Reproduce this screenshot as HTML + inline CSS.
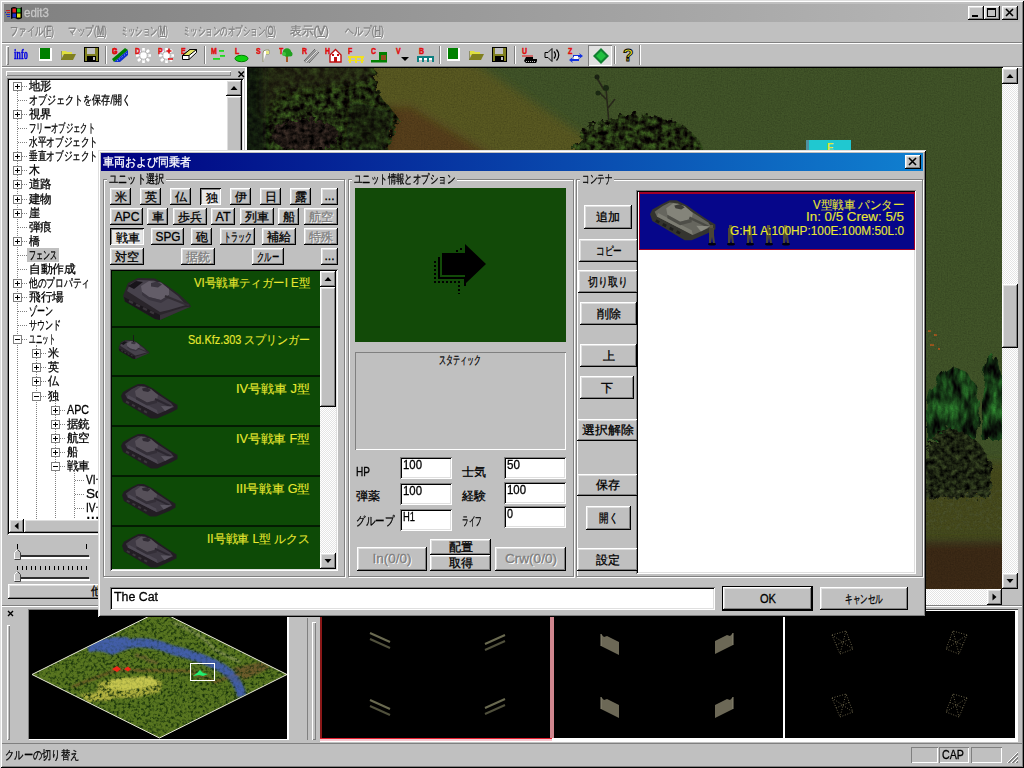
<!DOCTYPE html>
<html lang="ja"><head><meta charset="utf-8"><title>edit3</title>
<style>
html,body{margin:0;padding:0}
body{width:1024px;height:768px;overflow:hidden;background:#c0c0c0;font:12px/14px "Liberation Sans",sans-serif;color:#000;position:relative}
.a,.b,.s,.t,.s1{position:absolute;box-sizing:border-box}
.t{white-space:nowrap;display:block;-webkit-text-stroke:.3px}
.b{background:#c0c0c0;box-shadow:inset -1px -1px #000,inset 1px 1px #fff,inset -2px -2px #808080,inset 2px 2px #dfdfdf}
.b.p{background:#e8e8e8;box-shadow:inset 1px 1px #000,inset -1px -1px #fff,inset 2px 2px #808080,inset -2px -2px #dfdfdf}
.s{background:#fff;box-shadow:inset 1px 1px #808080,inset -1px -1px #fff,inset 2px 2px #000,inset -2px -2px #dfdfdf}
.s1{box-shadow:inset 1px 1px #808080,inset -1px -1px #fff}
.g{position:absolute;box-sizing:border-box;border:1px solid #808080;box-shadow:1px 1px #fff,inset 1px 1px #fff}
.dis{color:#808080;text-shadow:1px 1px #fff}
.sb{background-color:#e4e4e4;background-image:linear-gradient(45deg,#fff 25%,transparent 25%,transparent 75%,#fff 75%),linear-gradient(45deg,#fff 25%,transparent 25%,transparent 75%,#fff 75%);background-size:2px 2px;background-position:0 0,1px 1px}
.pm{position:absolute;width:9px;height:9px;box-sizing:border-box;border:1px solid #808080;background:#fff}
.pm:before{content:"";position:absolute;left:1px;top:3px;width:5px;height:1px;background:#000}
.pm.pl:after{content:"";position:absolute;left:3px;top:1px;width:1px;height:5px;background:#000}
.dv{position:absolute;width:0;border-left:1px dotted #808080}
.dh{position:absolute;height:0;border-top:1px dotted #808080}
.y{color:#e8e830;-webkit-text-stroke:.12px}
</style></head><body>
<div class="a" style="left:0;top:0;width:1024px;height:768px;box-shadow:inset 1px 1px #dfdfdf,inset -1px -1px #000,inset 2px 2px #fff,inset -2px -2px #808080"></div>
<div class="a" style="left:4px;top:4px;width:1016px;height:18px;background:linear-gradient(90deg,#808080,#b9b9b9)"></div>
<svg class="a" style="left:5px;top:5px;" width="18" height="16" viewBox="0 0 18 16"><path d="M6,3 q3,-2 6,0 q2,1 5,-1 v11 q-3,2 -5,1 q-3,-2 -6,0z" fill="#000"/>
<rect x="7.5" y="3.5" width="3.5" height="4" fill="#e02020"/><rect x="12" y="3.5" width="3.5" height="4" fill="#20c020"/>
<rect x="7.5" y="8.5" width="3.5" height="4" fill="#2030d0"/><rect x="12" y="8.5" width="3.5" height="4" fill="#e0e020"/>
<g fill="#c02020"><rect x="1" y="5" width="4" height="1"/><rect x="2" y="7" width="3" height="1"/></g>
<g fill="#2030c0"><rect x="1" y="9" width="4" height="1"/><rect x="2" y="11" width="3" height="1"/><rect x="0" y="7" width="1" height="1"/></g></svg>
<span class="t" style="left:24px;top:5px;font-size:13px;line-height:16px;color:#c6c6c6;transform:scaleX(0.886);transform-origin:0 0;">edit3</span>
<div class="b" style="left:968px;top:6px;width:16px;height:14px;"></div>
<svg class="a" style="left:968px;top:6px;" width="16" height="14" viewBox="0 0 16 14"><rect x="4" y="9" width="6" height="2" fill="#000"/></svg>
<div class="b" style="left:984px;top:6px;width:16px;height:14px;"></div>
<svg class="a" style="left:984px;top:6px;" width="16" height="14" viewBox="0 0 16 14"><rect x="3.5" y="2.5" width="8" height="8" fill="none" stroke="#000"/><rect x="3" y="2" width="9" height="2" fill="#000"/></svg>
<div class="b" style="left:1002px;top:6px;width:16px;height:14px;"></div>
<svg class="a" style="left:1002px;top:6px;" width="16" height="14" viewBox="0 0 16 14"><path d="M4,3 L11,10 M11,3 L4,10" stroke="#000" stroke-width="1.6"/></svg>
<span class="t dis" style="left:10px;top:24px;transform:scaleX(0.695);transform-origin:0 0;">ファイル(<u>F</u>)</span>
<span class="t dis" style="left:68px;top:24px;transform:scaleX(0.722);transform-origin:0 0;">マップ(<u>M</u>)</span>
<span class="t dis" style="left:121px;top:24px;transform:scaleX(0.603);transform-origin:0 0;">ミッション(<u>M</u>)</span>
<span class="t dis" style="left:183px;top:24px;transform:scaleX(0.623);transform-origin:0 0;">ミッションのオプション(<u>O</u>)</span>
<span class="t dis" style="left:290px;top:24px;transform:scaleX(0.975);transform-origin:0 0;">表示(<u>V</u>)</span>
<span class="t dis" style="left:345px;top:24px;transform:scaleX(0.740);transform-origin:0 0;">ヘルプ(<u>H</u>)</span>
<div class="a" style="left:2px;top:42px;width:1020px;height:1px;background:#808080"></div>
<div class="a" style="left:2px;top:43px;width:1020px;height:1px;background:#fff"></div>
<div class="a" style="left:2px;top:66px;width:1020px;height:1px;background:#808080"></div>
<div class="a" style="left:2px;top:67px;width:1020px;height:1px;background:#fff"></div>
<div class="a" style="left:6px;top:46px;width:3px;height:19px;box-shadow:inset 1px 1px #fff,inset -1px -1px #808080"></div>
<div class="a" style="left:639px;top:45px;width:2px;height:20px;border-left:1px solid #808080;border-right:1px solid #fff"></div>
<div class="a" style="left:105px;top:46px;width:2px;height:18px;border-left:1px solid #808080;border-right:1px solid #fff"></div>
<div class="a" style="left:204px;top:46px;width:2px;height:18px;border-left:1px solid #808080;border-right:1px solid #fff"></div>
<div class="a" style="left:439px;top:46px;width:2px;height:18px;border-left:1px solid #808080;border-right:1px solid #fff"></div>
<div class="a" style="left:514px;top:46px;width:2px;height:18px;border-left:1px solid #808080;border-right:1px solid #fff"></div>
<div class="a" style="left:614px;top:46px;width:2px;height:18px;border-left:1px solid #808080;border-right:1px solid #fff"></div>
<span class="t" style="left:14px;top:45.5px;font-size:15px;line-height:17px;font-weight:bold;font-family:'Liberation Serif',serif;color:#0000e0;transform:scaleX(0.560);transform-origin:0 0;">info</span>
<svg class="a" style="left:39px;top:47px;" width="14" height="15" viewBox="0 0 14 15"><rect x="0" y="1" width="13" height="13" fill="#fff"/><rect x="1" y="1" width="10" height="11" fill="#008000"/></svg>
<svg class="a" style="left:61px;top:48px;" width="15" height="14" viewBox="0 0 15 14"><path d="M1,3 h4 l1,1 h5 v3 h-10z" fill="#e0e040"/><path d="M0,12 l3,-6 h12 l-3,6z" fill="#808020"/><path d="M0,12 V3" stroke="#606010"/></svg>
<svg class="a" style="left:84px;top:47px;" width="15" height="15" viewBox="0 0 15 15"><rect x="0.5" y="0.5" width="14" height="14" fill="#808020" stroke="#000"/><rect x="3" y="1" width="8" height="6" fill="#c0c0c0"/><rect x="3" y="9" width="9" height="5" fill="#000"/><rect x="9" y="10" width="2" height="3" fill="#c0c0c0"/></svg>
<svg class="a" style="left:447px;top:47px;" width="14" height="15" viewBox="0 0 14 15"><rect x="0" y="1" width="13" height="13" fill="#fff"/><rect x="1" y="1" width="10" height="11" fill="#008000"/></svg>
<svg class="a" style="left:469px;top:48px;" width="15" height="14" viewBox="0 0 15 14"><path d="M1,3 h4 l1,1 h5 v3 h-10z" fill="#e0e040"/><path d="M0,12 l3,-6 h12 l-3,6z" fill="#808020"/><path d="M0,12 V3" stroke="#606010"/></svg>
<svg class="a" style="left:492px;top:47px;" width="15" height="15" viewBox="0 0 15 15"><rect x="0.5" y="0.5" width="14" height="14" fill="#808020" stroke="#000"/><rect x="3" y="1" width="8" height="6" fill="#c0c0c0"/><rect x="3" y="9" width="9" height="5" fill="#000"/><rect x="9" y="10" width="2" height="3" fill="#c0c0c0"/></svg>
<svg class="a" style="left:112px;top:47px;" width="17" height="16" viewBox="0 0 17 16"><text x="0" y="7" font-family="Liberation Sans" font-weight="bold" font-size="8.500" fill="#e01010" stroke="#e01010" stroke-width=".5" transform="translate(0,0) scale(.82,1) translate(0,0)">G</text><path d="M0,12 L13,1 l3,2 L2,15z" fill="#008000"/><path d="M2,15 L16,3 l0,5 L8,15z" fill="#1030d0"/><path d="M5,14 L15,6" stroke="#a0c0ff" stroke-dasharray="1 2"/><text x="0" y="7" font-family="Liberation Sans" font-weight="bold" font-size="8.500" fill="#e01010" stroke="#e01010" stroke-width=".5" transform="translate(0,0) scale(.82,1) translate(0,0)">G</text></svg>
<svg class="a" style="left:135px;top:47px;" width="17" height="16" viewBox="0 0 17 16"><g stroke="#fff" stroke-width="2.6"><path d="M8.500,1v3.500M8.500,12.500v3.500M1,8.500h3.500M12.500,8.500h3.500M3,3l2.500,2.500M11.500,11.500l2.500,2.500M14,3l-2.500,2.500M5.500,11.500l-2.500,2.500"/></g><circle cx="8.500" cy="8.500" r="3.200" fill="#fff"/><g stroke="#909090" stroke-width=".8" stroke-dasharray="1 1" fill="none"><circle cx="8.500" cy="8.500" r="4.400"/></g><text x="0" y="7" font-family="Liberation Sans" font-weight="bold" font-size="8.500" fill="#e01010" stroke="#e01010" stroke-width=".5" transform="translate(0,0) scale(.82,1) translate(0,0)">D</text></svg>
<svg class="a" style="left:158px;top:47px;" width="17" height="16" viewBox="0 0 17 16"><g stroke="#fff" stroke-width="2.6"><path d="M8.500,1v3.500M8.500,12.500v3.500M1,8.500h3.500M12.500,8.500h3.500M3,3l2.500,2.500M11.500,11.500l2.500,2.500M14,3l-2.500,2.500M5.500,11.500l-2.500,2.500"/></g><circle cx="8.500" cy="8.500" r="3.200" fill="#fff"/><g stroke="#909090" stroke-width=".8" stroke-dasharray="1 1" fill="none"><circle cx="8.500" cy="8.500" r="4.400"/></g><text x="0" y="7" font-family="Liberation Sans" font-weight="bold" font-size="8.500" fill="#e01010" stroke="#e01010" stroke-width=".5" transform="translate(0,0) scale(.82,1) translate(0,0)">P</text><path d="M11,1.5v5M8.5,4h5" stroke="#e01010" stroke-width="1.6"/><path d="M10,12h5" stroke="#e01010" stroke-width="1.6"/></svg>
<svg class="a" style="left:181px;top:47px;" width="17" height="16" viewBox="0 0 17 16"><text x="0" y="7" font-family="Liberation Sans" font-weight="bold" font-size="8.500" fill="#e01010" stroke="#e01010" stroke-width=".5" transform="translate(0,0) scale(.82,1) translate(0,0)">E</text><path d="M1.500,8.500 L9,2.500 h6.500 v3 L8,12.500 H1.500z" fill="#fff" stroke="#000"/><path d="M1.500,8.500 L9,2.500 h6.500 L8,8.500z" fill="#e4e460" stroke="#000"/><path d="M8,8.500 v4" stroke="#000"/></svg>
<svg class="a" style="left:211px;top:47px;" width="16" height="16" viewBox="0 0 16 16"><text x="0" y="7" font-family="Liberation Sans" font-weight="bold" font-size="8.500" fill="#e01010" stroke="#e01010" stroke-width=".5" transform="translate(0,0) scale(.82,1) translate(0,0)">M</text><g fill="#20d820"><rect x="8" y="3" width="5" height="1.800"/><rect x="9" y="8" width="5" height="1.800"/><rect x="2" y="11" width="7" height="1.800"/></g></svg>
<svg class="a" style="left:233px;top:47px;" width="17" height="16" viewBox="0 0 17 16"><text x="2" y="7" font-family="Liberation Sans" font-weight="bold" font-size="8.500" fill="#e01010" stroke="#e01010" stroke-width=".5" transform="translate(2,0) scale(.82,1) translate(-2,0)">L</text><ellipse cx="8.500" cy="11.500" rx="6.500" ry="3.200" fill="#10d010" stroke="#008000"/></svg>
<svg class="a" style="left:256px;top:47px;" width="16" height="16" viewBox="0 0 16 16"><text x="0" y="7" font-family="Liberation Sans" font-weight="bold" font-size="8.500" fill="#e01010" stroke="#e01010" stroke-width=".5" transform="translate(0,0) scale(.82,1) translate(0,0)">S</text><path d="M7,15 V6 q0,-3 3,-3 h3 v4 h-3" fill="#fff" stroke="#909070"/><rect x="10" y="4" width="3" height="3" fill="#e8e880"/></svg>
<svg class="a" style="left:279px;top:47px;" width="16" height="16" viewBox="0 0 16 16"><text x="0" y="7" font-family="Liberation Sans" font-weight="bold" font-size="8.500" fill="#e01010" stroke="#e01010" stroke-width=".5" transform="translate(0,0) scale(.82,1) translate(0,0)">T</text><path d="M8,15 V8" stroke="#a04000" stroke-width="1.6"/><circle cx="8" cy="5.5" r="4.2" fill="#20a020"/><circle cx="11" cy="7" r="2.5" fill="#20a020"/><circle cx="5" cy="7" r="2" fill="#40c040"/></svg>
<svg class="a" style="left:302px;top:47px;" width="17" height="16" viewBox="0 0 17 16"><text x="0" y="7" font-family="Liberation Sans" font-weight="bold" font-size="8.500" fill="#e01010" stroke="#e01010" stroke-width=".5" transform="translate(0,0) scale(.82,1) translate(0,0)">R</text><path d="M2,15 L13,3 l3,1 L6,16z" fill="#909090"/><path d="M4,15 L15,4" stroke="#e0e0e0"/><path d="M2,14 L13,2 M7,16 L17,5" stroke="#606060"/></svg>
<svg class="a" style="left:325px;top:47px;" width="17" height="16" viewBox="0 0 17 16"><text x="0" y="7" font-family="Liberation Sans" font-weight="bold" font-size="8.500" fill="#e01010" stroke="#e01010" stroke-width=".5" transform="translate(0,0) scale(.82,1) translate(0,0)">H</text><path d="M5,8 L10.5,2.5 L16,8 V15 H5z" fill="#fff" stroke="#c01010" stroke-width="1.4"/><rect x="9" y="10" width="3" height="5" fill="#c01010"/><rect x="7" y="7" width="2" height="2" fill="#c01010"/><rect x="12" y="7" width="2" height="2" fill="#c01010"/></svg>
<svg class="a" style="left:348px;top:47px;" width="17" height="16" viewBox="0 0 17 16"><text x="0" y="7" font-family="Liberation Sans" font-weight="bold" font-size="8.500" fill="#e01010" stroke="#e01010" stroke-width=".5" transform="translate(0,0) scale(.82,1) translate(0,0)">F</text><g fill="#f0e020"><rect x="0" y="9" width="16" height="2"/><rect x="1" y="9" width="2" height="7"/><rect x="7" y="9" width="2" height="7"/><rect x="13" y="9" width="2" height="7"/><rect x="0" y="13" width="16" height="1"/></g></svg>
<svg class="a" style="left:371px;top:47px;" width="17" height="16" viewBox="0 0 17 16"><text x="0" y="7" font-family="Liberation Sans" font-weight="bold" font-size="8.500" fill="#e01010" stroke="#e01010" stroke-width=".5" transform="translate(0,0) scale(.82,1) translate(0,0)">C</text><rect x="8" y="5" width="8" height="10" fill="#008000"/><rect x="10" y="8" width="5" height="7" fill="#905020"/><rect x="0" y="13" width="16" height="2.5" fill="#008000"/></svg>
<svg class="a" style="left:395px;top:47px;" width="15" height="16" viewBox="0 0 15 16"><text x="1" y="7" font-family="Liberation Sans" font-weight="bold" font-size="8.500" fill="#e01010" stroke="#e01010" stroke-width=".5" transform="translate(1,0) scale(.82,1) translate(-1,0)">V</text><polygon points="6,10 14,10 10,14" fill="#000"/></svg>
<svg class="a" style="left:417px;top:47px;" width="17" height="16" viewBox="0 0 17 16"><text x="2" y="7" font-family="Liberation Sans" font-weight="bold" font-size="8.500" fill="#e01010" stroke="#e01010" stroke-width=".5" transform="translate(2,0) scale(.82,1) translate(-2,0)">B</text><g fill="#108080"><rect x="0" y="9" width="17" height="2"/><rect x="0" y="11" width="2" height="4"/><rect x="5" y="11" width="2" height="4"/><rect x="10" y="11" width="2" height="4"/><rect x="15" y="11" width="2" height="4"/></g><rect x="2" y="11" width="3" height="2" fill="#fff"/><rect x="7" y="11" width="3" height="2" fill="#fff"/><rect x="12" y="11" width="3" height="2" fill="#fff"/></svg>
<svg class="a" style="left:521px;top:47px;" width="17" height="16" viewBox="0 0 17 16"><text x="1" y="7" font-family="Liberation Sans" font-weight="bold" font-size="8.500" fill="#e01010" stroke="#e01010" stroke-width=".5" transform="translate(1,0) scale(.82,1) translate(-1,0)">U</text><path d="M1,9 h11" stroke="#e01010" stroke-width="1"/><path d="M5,10 h7 v2 h4 v2 l-1,2 H5 l-2,-2z" fill="#000"/><path d="M5,14.5h9" stroke="#c0c0c0" stroke-dasharray="1 1"/></svg>
<svg class="a" style="left:544px;top:47px;" width="17" height="16" viewBox="0 0 17 16"><path d="M1,5.5 h3 l4,-4 v13 l-4,-4 h-3z" fill="#c0c0c0" stroke="#000"/><path d="M10,4.5 q3,3.5 0,7 M12.5,2.5 q4.5,5.5 0,11" fill="none" stroke="#000" stroke-width="1.2"/></svg>
<svg class="a" style="left:567px;top:47px;" width="17" height="16" viewBox="0 0 17 16"><text x="1" y="7" font-family="Liberation Sans" font-weight="bold" font-size="8.500" fill="#e01010" stroke="#e01010" stroke-width=".5" transform="translate(1,0) scale(.82,1) translate(-1,0)">Z</text><path d="M6,8 h7 l-1,-2 4,3 -4,3 1,-2 H6z" fill="#1030e0"/><path d="M12,14 H5 l1,2 -4,-3 4,-3 -1,2 h7z" fill="#1030e0"/><rect x="7" y="9" width="4" height="3" fill="#fff"/></svg>
<div class="a" style="left:588px;top:45px;width:24px;height:21px;background:#e0e0e0;box-shadow:inset 1px 1px #808080,inset -1px -1px #fff"></div>
<svg class="a" style="left:593px;top:48px;" width="16" height="16" viewBox="0 0 16 16"><polygon points="8,0 16,8 8,16 0,8" fill="#108030"/><polygon points="8,3 13,8 8,13 3,8" fill="#20c040"/></svg>
<svg class="a" style="left:621px;top:47px;" width="14" height="16" viewBox="0 0 14 16"><text x="2" y="14" font-family="Liberation Sans" font-weight="bold" font-size="17" fill="#e8e020" stroke="#000" stroke-width=".9">?</text></svg>
<div class="a" style="left:6px;top:71px;width:225px;height:5px;box-shadow:inset 1px 1px #fff,inset -1px -1px #808080"></div>
<svg class="a" style="left:237px;top:70px;" width="9" height="9" viewBox="0 0 9 9"><path d="M1.5,1.5 L7,7 M7,1.5 L1.5,7" stroke="#000" stroke-width="1.5"/></svg>
<div class="s" style="left:7px;top:78px;width:237px;height:457px;"></div>
<div class="a" style="left:9px;top:80px;width:217px;height:439px;overflow:hidden;background:#fff">
<div class="dv" style="left:8px;top:6px;width:0px;height:440px;"></div>
<div class="dv" style="left:27px;top:265px;width:0px;height:180px;"></div>
<div class="dv" style="left:46px;top:321px;width:0px;height:125px;"></div>
<div class="dv" style="left:65px;top:391px;width:0px;height:55px;"></div>
<div class="dh" style="left:9px;top:6px;width:9px;height:0px;"></div>
<i class="pm pl" style="left:4px;top:2px"></i>
<span class="t" style="left:20px;top:-1px;transform:scaleX(0.958);transform-origin:0 0;">地形</span>
<div class="dh" style="left:9px;top:20px;width:9px;height:0px;"></div>
<span class="t" style="left:20px;top:13.07px;transform:scaleX(0.754);transform-origin:0 0;">オブジェクトを保存/開く</span>
<div class="dh" style="left:9px;top:34px;width:9px;height:0px;"></div>
<i class="pm pl" style="left:4px;top:30px"></i>
<span class="t" style="left:20px;top:27.14px;transform:scaleX(0.958);transform-origin:0 0;">視界</span>
<div class="dh" style="left:9px;top:48px;width:9px;height:0px;"></div>
<span class="t" style="left:20px;top:41.21px;transform:scaleX(0.611);transform-origin:0 0;">フリーオブジェクト</span>
<div class="dh" style="left:9px;top:62px;width:9px;height:0px;"></div>
<span class="t" style="left:20px;top:55.28px;transform:scaleX(0.719);transform-origin:0 0;">水平オブジェクト</span>
<div class="dh" style="left:9px;top:76px;width:9px;height:0px;"></div>
<i class="pm pl" style="left:4px;top:72px"></i>
<span class="t" style="left:20px;top:69.35px;transform:scaleX(0.719);transform-origin:0 0;">垂直オブジェクト</span>
<div class="dh" style="left:9px;top:90px;width:9px;height:0px;"></div>
<i class="pm pl" style="left:4px;top:86px"></i>
<span class="t" style="left:20px;top:83.42px;transform:scaleX(0.917);transform-origin:0 0;">木</span>
<div class="dh" style="left:9px;top:104px;width:9px;height:0px;"></div>
<i class="pm pl" style="left:4px;top:100px"></i>
<span class="t" style="left:20px;top:97.49px;transform:scaleX(0.958);transform-origin:0 0;">道路</span>
<div class="dh" style="left:9px;top:119px;width:9px;height:0px;"></div>
<i class="pm pl" style="left:4px;top:115px"></i>
<span class="t" style="left:20px;top:111.56px;transform:scaleX(0.958);transform-origin:0 0;">建物</span>
<div class="dh" style="left:9px;top:133px;width:9px;height:0px;"></div>
<i class="pm pl" style="left:4px;top:129px"></i>
<span class="t" style="left:20px;top:125.63px;transform:scaleX(0.917);transform-origin:0 0;">崖</span>
<div class="dh" style="left:9px;top:147px;width:9px;height:0px;"></div>
<span class="t" style="left:20px;top:139.7px;transform:scaleX(0.958);transform-origin:0 0;">弾痕</span>
<div class="dh" style="left:9px;top:161px;width:9px;height:0px;"></div>
<i class="pm pl" style="left:4px;top:157px"></i>
<span class="t" style="left:20px;top:153.77px;transform:scaleX(0.917);transform-origin:0 0;">橋</span>
<div class="dh" style="left:9px;top:175px;width:9px;height:0px;"></div>
<div class="a" style="left:18px;top:168px;width:32px;height:14px;background:#c0c0c0"></div>
<span class="t" style="left:20px;top:167.84px;transform:scaleX(0.583);transform-origin:0 0;">フェンス</span>
<div class="dh" style="left:9px;top:189px;width:9px;height:0px;"></div>
<span class="t" style="left:20px;top:181.91px;transform:scaleX(0.979);transform-origin:0 0;">自動作成</span>
<div class="dh" style="left:9px;top:203px;width:9px;height:0px;"></div>
<i class="pm pl" style="left:4px;top:199px"></i>
<span class="t" style="left:20px;top:195.98px;transform:scaleX(0.726);transform-origin:0 0;">他のプロパティ</span>
<div class="dh" style="left:9px;top:217px;width:9px;height:0px;"></div>
<i class="pm pl" style="left:4px;top:213px"></i>
<span class="t" style="left:20px;top:210.05px;transform:scaleX(0.972);transform-origin:0 0;">飛行場</span>
<div class="dh" style="left:9px;top:231px;width:9px;height:0px;"></div>
<span class="t" style="left:20px;top:224.12px;transform:scaleX(0.667);transform-origin:0 0;">ゾーン</span>
<div class="dh" style="left:9px;top:245px;width:9px;height:0px;"></div>
<span class="t" style="left:20px;top:238.19px;transform:scaleX(0.667);transform-origin:0 0;">サウンド</span>
<div class="dh" style="left:9px;top:259px;width:9px;height:0px;"></div>
<i class="pm" style="left:4px;top:255px"></i>
<span class="t" style="left:20px;top:252.26px;transform:scaleX(0.542);transform-origin:0 0;">ユニット</span>
<div class="dh" style="left:28px;top:273px;width:9px;height:0px;"></div>
<i class="pm pl" style="left:23px;top:269px"></i>
<span class="t" style="left:39px;top:266.33px;transform:scaleX(0.917);transform-origin:0 0;">米</span>
<div class="dh" style="left:28px;top:287px;width:9px;height:0px;"></div>
<i class="pm pl" style="left:23px;top:283px"></i>
<span class="t" style="left:39px;top:280.4px;transform:scaleX(0.917);transform-origin:0 0;">英</span>
<div class="dh" style="left:28px;top:301px;width:9px;height:0px;"></div>
<i class="pm pl" style="left:23px;top:297px"></i>
<span class="t" style="left:39px;top:294.47px;transform:scaleX(0.917);transform-origin:0 0;">仏</span>
<div class="dh" style="left:28px;top:316px;width:9px;height:0px;"></div>
<i class="pm" style="left:23px;top:312px"></i>
<span class="t" style="left:39px;top:308.54px;transform:scaleX(0.917);transform-origin:0 0;">独</span>
<div class="dh" style="left:47px;top:330px;width:9px;height:0px;"></div>
<i class="pm pl" style="left:42px;top:326px"></i>
<span class="t" style="left:58px;top:322.61px;transform:scaleX(0.891);transform-origin:0 0;">APC</span>
<div class="dh" style="left:47px;top:344px;width:9px;height:0px;"></div>
<i class="pm pl" style="left:42px;top:340px"></i>
<span class="t" style="left:58px;top:336.68px;transform:scaleX(0.958);transform-origin:0 0;">据銃</span>
<div class="dh" style="left:47px;top:358px;width:9px;height:0px;"></div>
<i class="pm pl" style="left:42px;top:354px"></i>
<span class="t" style="left:58px;top:350.75px;transform:scaleX(0.958);transform-origin:0 0;">航空</span>
<div class="dh" style="left:47px;top:372px;width:9px;height:0px;"></div>
<i class="pm pl" style="left:42px;top:368px"></i>
<span class="t" style="left:58px;top:364.82px;transform:scaleX(0.917);transform-origin:0 0;">船</span>
<div class="dh" style="left:47px;top:386px;width:9px;height:0px;"></div>
<i class="pm" style="left:42px;top:382px"></i>
<span class="t" style="left:58px;top:378.89px;transform:scaleX(0.958);transform-origin:0 0;">戦車</span>
<div class="dh" style="left:66px;top:400px;width:9px;height:0px;"></div>
<span class="t" style="left:77px;top:392.96px;transform:scaleX(0.845);transform-origin:0 0;">VI号戦車</span>
<div class="dh" style="left:66px;top:414px;width:9px;height:0px;"></div>
<span class="t" style="left:77px;top:407.03px;transform:scaleX(1.131);transform-origin:0 0;">Sd.Kfz</span>
<div class="dh" style="left:66px;top:428px;width:9px;height:0px;"></div>
<span class="t" style="left:77px;top:421.1px;transform:scaleX(0.845);transform-origin:0 0;">IV号戦車</span>
<div class="dh" style="left:66px;top:442px;width:9px;height:0px;"></div>
<span class="t" style="left:77px;top:435.17px;transform:scaleX(1.363);transform-origin:0 0;">III号</span>
</div>
<div class="a sb" style="left:226px;top:80px;width:16px;height:439px;"></div>
<div class="b" style="left:226px;top:80px;width:16px;height:16px;"></div>
<svg class="a" style="left:226px;top:80px;" width="16" height="16" viewBox="0 0 16 16"><polygon points="4.5,10.0 11.5,10.0 8.0,6.0" fill="#000"/></svg>
<div class="b" style="left:226px;top:96px;width:16px;height:300px;"></div>
<div class="a sb" style="left:9px;top:519px;width:233px;height:14px;"></div>
<div class="b" style="left:9px;top:519px;width:15px;height:14px;"></div>
<svg class="a" style="left:9px;top:519px;" width="15" height="14" viewBox="0 0 15 14"><polygon points="9.5,3.5 9.5,10.5 5.5,7.0" fill="#000"/></svg>
<div class="b" style="left:24px;top:519px;width:170px;height:14px;"></div>
<div class="a" style="left:226px;top:519px;width:16px;height:14px;background:#c0c0c0"></div>
<div class="a" style="left:17px;top:544px;width:1px;height:5px;background:#000"></div>
<div class="a" style="left:86px;top:544px;width:1px;height:5px;background:#000"></div>
<div class="a" style="left:20px;top:555px;width:69px;height:2px;background:#303030"></div>
<div class="a" style="left:20px;top:557px;width:70px;height:2px;background:#fff"></div>
<svg class="a" style="left:14px;top:549px;" width="8" height="11" viewBox="0 0 8 11"><path d="M0.5,3.5 L3.5,0.5 L6.5,3.5 V10 H0.5z" fill="#c0c0c0" stroke="#fff"/><path d="M3.5,0.5 L6.5,3.5 V10.5 H0.5" fill="none" stroke="#404040"/></svg>
<div class="a" style="left:17px;top:566px;width:1px;height:4px;background:#000"></div>
<div class="a" style="left:21.6px;top:566px;width:1px;height:4px;background:#000"></div>
<div class="a" style="left:26.2px;top:566px;width:1px;height:4px;background:#000"></div>
<div class="a" style="left:30.8px;top:566px;width:1px;height:4px;background:#000"></div>
<div class="a" style="left:35.4px;top:566px;width:1px;height:4px;background:#000"></div>
<div class="a" style="left:40px;top:566px;width:1px;height:4px;background:#000"></div>
<div class="a" style="left:44.6px;top:566px;width:1px;height:4px;background:#000"></div>
<div class="a" style="left:49.2px;top:566px;width:1px;height:4px;background:#000"></div>
<div class="a" style="left:53.8px;top:566px;width:1px;height:4px;background:#000"></div>
<div class="a" style="left:58.4px;top:566px;width:1px;height:4px;background:#000"></div>
<div class="a" style="left:63px;top:566px;width:1px;height:4px;background:#000"></div>
<div class="a" style="left:67.6px;top:566px;width:1px;height:4px;background:#000"></div>
<div class="a" style="left:72.2px;top:566px;width:1px;height:4px;background:#000"></div>
<div class="a" style="left:76.8px;top:566px;width:1px;height:4px;background:#000"></div>
<div class="a" style="left:81.4px;top:566px;width:1px;height:4px;background:#000"></div>
<div class="a" style="left:86px;top:566px;width:1px;height:4px;background:#000"></div>
<div class="a" style="left:20px;top:577px;width:69px;height:2px;background:#303030"></div>
<div class="a" style="left:20px;top:579px;width:70px;height:2px;background:#fff"></div>
<svg class="a" style="left:14px;top:571px;" width="8" height="11" viewBox="0 0 8 11"><path d="M0.5,3.5 L3.5,0.5 L6.5,3.5 V10 H0.5z" fill="#c0c0c0" stroke="#fff"/><path d="M3.5,0.5 L6.5,3.5 V10.5 H0.5" fill="none" stroke="#404040"/></svg>
<div class="a" style="left:8px;top:584px;width:92px;height:15px;overflow:hidden;">
<div class="b" style="left:0px;top:0px;width:110px;height:15px;"></div>
<span class="t" style="left:82.5px;top:0px;">他...</span>
</div>
<div class="a" style="left:245px;top:68px;width:2px;height:538px;background:#fff"></div>
<div class="a" style="left:247px;top:67px;width:756px;height:523px;background:#000"></div>
<svg class="a" style="left:247px;top:68px" width="755" height="521" viewBox="247 68 755 521">
<defs>
<filter id="nz" x="0" y="0" width="100%" height="100%"><feTurbulence type="fractalNoise" baseFrequency="0.7" numOctaves="2" seed="3"/><feColorMatrix values="0 0 0 0 0  0 0 0 0 0  0 0 0 0 0  0.9 0.9 0.9 0 -1.05"/></filter>
<filter id="nz2" x="0" y="0" width="100%" height="100%"><feTurbulence type="fractalNoise" baseFrequency="0.3" numOctaves="2" seed="4"/><feColorMatrix values="0 0 0 0 0.08  0 0 0 0 0.1  0 0 0 0 0.04  2.5 2.5 0 0 -2.3"/></filter>
<filter id="bl" x="-20%" y="-20%" width="140%" height="140%"><feGaussianBlur stdDeviation="4"/></filter>
<filter id="leaf" color-interpolation-filters="sRGB" x="-15%" y="-15%" width="130%" height="130%">
<feTurbulence type="fractalNoise" baseFrequency="0.16" numOctaves="3" seed="5" result="n"/>
<feColorMatrix in="n" values="0 0.45 0 0 -0.1  0 0.8 0 0 -0.23  0 0.25 0 0 -0.06  0 0 0 0 1" result="c"/>
<feDisplacementMap in="SourceGraphic" in2="n" scale="16" result="d"/>
<feComposite in="c" in2="d" operator="in"/></filter>
<filter id="leaf2" color-interpolation-filters="sRGB" x="-15%" y="-15%" width="130%" height="130%">
<feTurbulence type="fractalNoise" baseFrequency="0.2" numOctaves="3" seed="9" result="n"/>
<feColorMatrix in="n" values="0 0.45 0 0 -0.1  0 0.35 0 0 -0.08  0 0.3 0 0 -0.07  0 0 0 0 1" result="c"/>
<feDisplacementMap in="SourceGraphic" in2="n" scale="12" result="d"/>
<feComposite in="c" in2="d" operator="in"/></filter>
<filter id="leafw" color-interpolation-filters="sRGB" x="-15%" y="-15%" width="130%" height="130%">
<feTurbulence type="fractalNoise" baseFrequency="0.12 0.05" numOctaves="3" seed="2" result="n"/>
<feColorMatrix in="n" values="0 0.3 0 0 -0.06  0 0.9 0 0 -0.22  0 0.3 0 0 -0.06  0 0 0 0 1" result="c"/>
<feDisplacementMap in="SourceGraphic" in2="n" scale="12" result="d"/>
<feComposite in="c" in2="d" operator="in"/></filter>
<filter id="leaf3" color-interpolation-filters="sRGB" x="-15%" y="-15%" width="130%" height="130%">
<feTurbulence type="fractalNoise" baseFrequency="0.2" numOctaves="3" seed="9" result="n"/>
<feColorMatrix in="n" values="0 0.4 0 0 -0.08  0 0.5 0 0 -0.1  0 0.25 0 0 -0.05  0 0 0 0 1" result="c"/>
<feDisplacementMap in="SourceGraphic" in2="n" scale="12" result="d"/>
<feComposite in="c" in2="d" operator="in"/></filter>
</defs>
<rect x="247" y="68" width="755" height="522" fill="#425529"/>
<g filter="url(#bl)">
<polygon points="340,60 470,60 590,140 600,160 380,160 340,120" fill="#5a5a22"/>
<polygon points="385,108 410,106 500,160 380,160" fill="#58411c"/>
<rect x="920" y="462" width="90" height="76" fill="#474b1f"/>
<rect x="920" y="541" width="90" height="55" fill="#3d2c16"/>
</g>
<polygon points="240,60 372,60 380,95 398,118 385,160 240,160" fill="#000" filter="url(#leaf)"/>
<ellipse cx="305" cy="135" rx="34" ry="16" fill="#000" filter="url(#leaf2)"/>
<rect x="240" y="60" width="26" height="100" fill="#10160c" opacity=".7" filter="url(#bl)"/>
<polygon points="262,62 370,62 372,80 330,86 280,92 262,120" fill="#2c2a14" opacity=".6" filter="url(#bl)"/>
<polygon points="350,100 395,112 385,150 345,150" fill="#121a0c" opacity=".45" filter="url(#bl)"/>
<path d="M609,124 L606,88 M607,100 l-8,-8 M608,108 l7,-9 M604,90 l-7,-12" stroke="#2a2a1c" stroke-width="1.6" fill="none"/>
<circle cx="597" cy="77" r="2.5" fill="#1c2414"/><circle cx="606" cy="88" r="3" fill="#1c2a14"/><circle cx="598" cy="93" r="2.5" fill="#1c2a14"/>
<path d="M575,160 Q572,130 600,124 Q640,105 668,120 Q700,128 706,160Z" fill="#000" filter="url(#leaf)"/>
<g>
<path d="M926,440 Q924,380 950,366 Q975,368 978,400 L976,440Z" fill="#000" filter="url(#leafw)"/>
<path d="M982,440 Q980,370 992,354 Q1004,356 1006,440Z" fill="#000" filter="url(#leafw)"/>
<path d="M920,500 Q918,440 950,428 Q985,436 992,470 L990,496Z" fill="#000" filter="url(#leaf3)"/>
<rect x="926" y="490" width="76" height="40" filter="url(#nz2)" opacity=".5"/>
</g>
<g fill="#a05a20"><rect x="928" y="330" width="3" height="2"/><rect x="934" y="334" width="3" height="2"/><rect x="930" y="344" width="4" height="2"/><rect x="938" y="348" width="2" height="2"/></g>
<rect x="247" y="68" width="755" height="522" filter="url(#nz)" opacity=".2"/>
<rect x="809" y="140" width="42" height="13" fill="#20c8d0"/><rect x="806" y="140" width="3" height="13" fill="#5090a0"/>
<text x="827" y="151" font-family="Liberation Sans" font-weight="bold" font-size="10" fill="#e8e830">E</text>
</svg>
<div class="a sb" style="left:1002px;top:68px;width:16px;height:521px;"></div>
<div class="b" style="left:1002px;top:68px;width:16px;height:16px;"></div>
<svg class="a" style="left:1002px;top:68px;" width="16" height="16" viewBox="0 0 16 16"><polygon points="4.5,10.0 11.5,10.0 8.0,6.0" fill="#000"/></svg>
<div class="b" style="left:1002px;top:573px;width:16px;height:16px;"></div>
<svg class="a" style="left:1002px;top:573px;" width="16" height="16" viewBox="0 0 16 16"><polygon points="4.5,6.0 11.5,6.0 8.0,10.0" fill="#000"/></svg>
<div class="b" style="left:1002px;top:284px;width:16px;height:64px;"></div>
<div class="a sb" style="left:247px;top:589px;width:755px;height:16px;"></div>
<div class="b" style="left:987px;top:589px;width:15px;height:16px;"></div>
<svg class="a" style="left:987px;top:589px;" width="15" height="16" viewBox="0 0 15 16"><polygon points="5.5,4.5 5.5,11.5 9.5,8.0" fill="#000"/></svg>
<div class="a" style="left:1002px;top:589px;width:16px;height:16px;background:#c0c0c0"></div>
<div class="a" style="left:2px;top:605px;width:1020px;height:1px;background:#808080"></div>
<div class="a" style="left:2px;top:606px;width:1020px;height:1px;background:#fff"></div>
<div class="a" style="left:308px;top:609px;width:710px;height:1px;background:#404040"></div>
<div class="a" style="left:28px;top:609px;width:260px;height:130px;background:#808080"></div>
<svg class="a" style="left:7px;top:610px;" width="8" height="8" viewBox="0 0 8 8"><path d="M1,1 L6,6 M6,1 L1,6" stroke="#000" stroke-width="1.4"/></svg>
<div class="a" style="left:7px;top:625px;width:3px;height:115px;box-shadow:inset 1px 1px #fff,inset -1px -1px #808080"></div>
<div class="a" style="left:29px;top:610px;width:258px;height:129px;background:#000"></div>
<div class="a" style="left:287px;top:609px;width:2px;height:131px;background:#fff"></div>
<div class="a" style="left:29px;top:739px;width:260px;height:1px;background:#fff"></div>
<svg class="a" style="left:29px;top:609px" width="258" height="130" viewBox="29 609 258 130">
<defs><clipPath id="dm"><polygon points="32,674.5 159.5,611 287,674.5 159.5,738"/></clipPath>
<filter id="mnz" color-interpolation-filters="sRGB" x="0" y="0" width="100%" height="100%"><feTurbulence type="fractalNoise" baseFrequency="0.35" numOctaves="2" seed="11"/><feColorMatrix values="0 0 0 0 0.06  0 0 0 0 0.16  0 0 0 0 0.03  0 2.6 0 0 -1.15"/></filter>
<filter id="mb"><feGaussianBlur stdDeviation="1.1"/></filter></defs>
<rect x="29" y="610" width="258" height="129" fill="#000"/>
<g clip-path="url(#dm)">
<rect x="29" y="609" width="258" height="130" fill="#587520"/>
<g filter="url(#mb)">
<polygon points="99,682 120,678 150,676 162,682 160,692 135,698 110,698 96,694" fill="#a8aa3c"/>
<polygon points="112,680 150,677 158,684 130,690 108,688" fill="#c6c650"/>
<polygon points="80,694 110,692 112,700 88,702" fill="#b0b040"/>
<path d="M88,648 Q100,644 112,650 L128,644 Q150,640 172,650 Q200,656 222,668 Q238,678 242,696" stroke="#3e58a2" stroke-width="9" fill="none"/>
<path d="M92,647 q14,-6 36,-5" stroke="#3e58a2" stroke-width="9" fill="none"/>
<path d="M72,687 L116,670 L190,671 L215,682 L232,676 L268,666" stroke="#6e5228" stroke-width="2.4" fill="none"/>
<path d="M173,623 Q200,632 215,650 L240,662" stroke="#9aa070" stroke-width="1.6" fill="none"/>
<polygon points="232,668 262,662 270,668 244,680" fill="#6a5a2c"/>
<path d="M135,655 l12,3 M146,660 l12,3" stroke="#6a6030" stroke-width="3"/>
<path d="M226,676 l14,6" stroke="#505050" stroke-width="3"/>
</g>
<rect x="29" y="609" width="258" height="130" filter="url(#mnz)"/>
<g filter="url(#mb)" opacity=".75"><path d="M88,648 Q100,644 112,650 L128,644 Q150,640 172,650 Q200,656 222,668 Q238,678 242,696" stroke="#4460aa" stroke-width="7" fill="none"/><path d="M92,647 q14,-6 36,-5" stroke="#4460aa" stroke-width="8" fill="none"/>
<polygon points="112,680 150,677 158,684 130,690 108,688" fill="#c6c650"/></g>
<path d="M112,669 l5,-3 4,3 -4,3z" fill="#f02818"/><path d="M124,669 l4,-2.500 3,2.500 -3,2.500z" fill="#f02818"/>
<path d="M193,676 l4,-3 3,-3 3,3 5,1 -5,2 -4,-1z" fill="#20f070"/>
</g>
<polygon points="32,674.5 159.5,611 287,674.5 159.5,738" fill="none" stroke="#e8e8d8" stroke-width="1"/>
<rect x="190.500" y="663.500" width="24" height="17" fill="none" stroke="#fff"/>
</svg>
<div class="a" style="left:307px;top:618px;width:1px;height:122px;background:#808080"></div>
<div class="a" style="left:312px;top:622px;width:4px;height:118px;box-shadow:inset 1px 1px #fff,inset -1px -1px #808080"></div>
<div class="a" style="left:308px;top:610px;width:710px;height:1px;background:#fff"></div>
<div class="a" style="left:320px;top:611px;width:695px;height:127px;background:#000"></div>
<div class="a" style="left:320px;top:738px;width:695px;height:4px;background:#fff"></div>
<div class="a" style="left:320px;top:738px;width:232px;height:1px;background:#e02030"></div>
<div class="a" style="left:320px;top:739px;width:232px;height:2px;background:#f8c8d0"></div>
<div class="a" style="left:320px;top:611px;width:2px;height:127px;background:#8a1818"></div>
<div class="a" style="left:550px;top:611px;width:4px;height:127px;background:#d0868e"></div>
<div class="a" style="left:783px;top:611px;width:2px;height:127px;background:#fff"></div>
<div class="a" style="left:1015px;top:610px;width:3px;height:132px;background:#fff"></div>
<svg class="a" style="left:320px;top:617px" width="696" height="122" viewBox="320 617 696 122"><g stroke="#6a6a50" stroke-width="2"><path d="M370,633 L390,642"/><path d="M370,639 L390,648" stroke="#50503c"/></g><g stroke="#6a6a50" stroke-width="2"><path d="M505,635 L485,644"/><path d="M505,641 L485,650" stroke="#50503c"/></g><g stroke="#6a6a50" stroke-width="2"><path d="M370,700 L390,709"/><path d="M370,706 L390,715" stroke="#50503c"/></g><g stroke="#6a6a50" stroke-width="2"><path d="M505,699 L485,708"/><path d="M505,705 L485,714" stroke="#50503c"/></g><polygon points="601,634 604,637 607,636 619,642 619,655 601,646" fill="#6c6856"/><path d="M601,634 V646" stroke="#8a8672"/><polygon points="733,633 730,636 727,635 715,641 715,654 733,645" fill="#6c6856"/><path d="M733,633 V645" stroke="#8a8672"/><polygon points="601,697 604,700 607,699 619,705 619,718 601,709" fill="#6c6856"/><path d="M601,697 V709" stroke="#8a8672"/><polygon points="733,697 730,700 727,699 715,705 715,718 733,709" fill="#6c6856"/><path d="M733,697 V709" stroke="#8a8672"/><g fill="none" stroke="#807858" stroke-width="1" stroke-dasharray="1 1.6" opacity=".8"><polygon points="832,635 846,631 853,649 840,654"/><path d="M832,635 L853,649 M846,631 L840,654 M836,645 L850,639"/></g><g fill="none" stroke="#807858" stroke-width="1" stroke-dasharray="1 1.6" opacity=".8"><polygon points="967,635 953,631 946,649 959,654"/><path d="M967,635 L946,649 M953,631 L959,654 M963,645 L949,639"/></g><g fill="none" stroke="#807858" stroke-width="1" stroke-dasharray="1 1.6" opacity=".8"><polygon points="832,698 846,694 853,712 840,717"/><path d="M832,698 L853,712 M846,694 L840,717 M836,708 L850,702"/></g><g fill="none" stroke="#807858" stroke-width="1" stroke-dasharray="1 1.6" opacity=".8"><polygon points="967,698 953,694 946,712 959,717"/><path d="M967,698 L946,712 M953,694 L959,717 M963,708 L949,702"/></g></svg>
<div class="a" style="left:2px;top:743px;width:1020px;height:1px;background:#808080"></div>
<span class="t" style="left:5px;top:748px;transform:scaleX(0.771);transform-origin:0 0;">クルーの切り替え</span>
<div class="s1" style="left:911px;top:747px;width:27px;height:16px;"></div>
<div class="s1" style="left:939px;top:747px;width:30px;height:16px;"></div>
<div class="s1" style="left:971px;top:747px;width:31px;height:16px;"></div>
<span class="t" style="left:942px;top:748px;transform:scaleX(0.891);transform-origin:0 0;">CAP</span>
<svg class="a" style="left:1006px;top:751px;" width="13" height="13" viewBox="0 0 13 13"><g stroke="#fff"><path d="M12,1 L1,12M12,5 L5,12M12,9 L9,12"/></g><g stroke="#808080"><path d="M12,2 L2,12M12,3 L3,12M12,6 L6,12M12,7 L7,12M12,10 L10,12M12,11 L11,12"/></g></svg>
<div class="a" style="left:98px;top:150px;width:828px;height:467px;background:#c0c0c0;box-shadow:inset 1px 1px #dfdfdf,inset -1px -1px #000,inset 2px 2px #fff,inset -2px -2px #808080"></div>
<div class="a" style="left:101px;top:153px;width:822px;height:18px;background:linear-gradient(90deg,#000080,#1080d0)"></div>
<span class="t" style="left:103px;top:154px;line-height:16px;color:#fff;transform:scaleX(0.917);transform-origin:0 0;">車両および同乗者</span>
<div class="b" style="left:905px;top:155px;width:16px;height:14px;"></div>
<svg class="a" style="left:905px;top:155px;" width="16" height="14" viewBox="0 0 16 14"><path d="M4,3 L11,10 M11,3 L4,10" stroke="#000" stroke-width="1.6"/></svg>
<div class="g" style="left:103px;top:179px;width:242px;height:398px;"></div>
<div class="a" style="left:107px;top:173px;width:59px;height:12px;background:#c0c0c0"></div>
<span class="t" style="left:109px;top:172px;transform:scaleX(0.764);transform-origin:0 0;">ユニット選択</span>
<div class="b" style="left:110px;top:188px;width:21px;height:17px;"></div>
<span class="t" style="left:120.5px;top:189.5px;transform:translateX(-50%);">米</span>
<div class="b" style="left:140px;top:188px;width:21px;height:17px;"></div>
<span class="t" style="left:150.5px;top:189.5px;transform:translateX(-50%);">英</span>
<div class="b" style="left:170px;top:188px;width:21px;height:17px;"></div>
<span class="t" style="left:180.5px;top:189.5px;transform:translateX(-50%);">仏</span>
<div class="b p" style="left:200px;top:188px;width:21px;height:17px;"></div>
<span class="t" style="left:211.5px;top:190.5px;transform:translateX(-50%);">独</span>
<div class="b" style="left:230px;top:188px;width:21px;height:17px;"></div>
<span class="t" style="left:240.5px;top:189.5px;transform:translateX(-50%);">伊</span>
<div class="b" style="left:260px;top:188px;width:21px;height:17px;"></div>
<span class="t" style="left:270.5px;top:189.5px;transform:translateX(-50%);">日</span>
<div class="b" style="left:290px;top:188px;width:21px;height:17px;"></div>
<span class="t" style="left:300.5px;top:189.5px;transform:translateX(-50%);">露</span>
<div class="b" style="left:321px;top:188px;width:17px;height:17px;"></div>
<span class="t" style="left:329.5px;top:188.5px;transform:translateX(-50%);">...</span>
<div class="b" style="left:110px;top:208px;width:33px;height:17px;"></div>
<span class="t" style="left:126.5px;top:209.5px;transform:translateX(-50%) scaleX(1.013);">APC</span>
<div class="b" style="left:147px;top:208px;width:21px;height:17px;"></div>
<span class="t" style="left:157.5px;top:209.5px;transform:translateX(-50%);">車</span>
<div class="b" style="left:173px;top:208px;width:34px;height:17px;"></div>
<span class="t" style="left:190px;top:209.5px;transform:translateX(-50%);">歩兵</span>
<div class="b" style="left:211px;top:208px;width:24px;height:17px;"></div>
<span class="t" style="left:223px;top:209.5px;transform:translateX(-50%) scaleX(1.038);">AT</span>
<div class="b" style="left:240px;top:208px;width:34px;height:17px;"></div>
<span class="t" style="left:257px;top:209.5px;transform:translateX(-50%);">列車</span>
<div class="b" style="left:278px;top:208px;width:21px;height:17px;"></div>
<span class="t" style="left:288.5px;top:209.5px;transform:translateX(-50%);">船</span>
<div class="b" style="left:304px;top:208px;width:34px;height:17px;"></div>
<span class="t dis" style="left:321px;top:209.5px;transform:translateX(-50%);">航空</span>
<div class="b p" style="left:110px;top:228px;width:34px;height:17px;"></div>
<span class="t" style="left:128px;top:230.5px;transform:translateX(-50%);">戦車</span>
<div class="b" style="left:151px;top:228px;width:33px;height:17px;"></div>
<span class="t" style="left:167.5px;top:229.5px;transform:translateX(-50%) scaleX(0.986);">SPG</span>
<div class="b" style="left:191px;top:228px;width:21px;height:17px;"></div>
<span class="t" style="left:201.5px;top:229.5px;transform:translateX(-50%);">砲</span>
<div class="b" style="left:220px;top:228px;width:35px;height:17px;"></div>
<span class="t" style="left:237.5px;top:229.5px;transform:translateX(-50%) scaleX(0.583);">トラック</span>
<div class="b" style="left:262px;top:228px;width:34px;height:17px;"></div>
<span class="t" style="left:279px;top:229.5px;transform:translateX(-50%);">補給</span>
<div class="b" style="left:304px;top:228px;width:34px;height:17px;"></div>
<span class="t dis" style="left:321px;top:229.5px;transform:translateX(-50%);">特殊</span>
<div class="b" style="left:110px;top:248px;width:34px;height:17px;"></div>
<span class="t" style="left:127px;top:249.5px;transform:translateX(-50%);">対空</span>
<div class="b" style="left:181px;top:248px;width:34px;height:17px;"></div>
<span class="t dis" style="left:198px;top:249.5px;transform:translateX(-50%);">据銃</span>
<div class="b" style="left:252px;top:248px;width:32px;height:17px;"></div>
<span class="t" style="left:268px;top:249.5px;transform:translateX(-50%) scaleX(0.611);">クルー</span>
<div class="b" style="left:321px;top:248px;width:17px;height:17px;"></div>
<span class="t" style="left:329.5px;top:248.5px;transform:translateX(-50%);">...</span>
<div class="s" style="left:110px;top:269px;width:228px;height:302px;background:#0c4a06"></div>
<div class="a" style="left:112px;top:271px;width:208px;height:298px;overflow:hidden;background:#0d4a06">
<svg width="0" height="0" style="position:absolute"><defs><symbol id="tk" viewBox="0 0 70 44"><path d="M1,19 L2.5,15 L6,6 L16,1 L33,1.5 L45,8.5 L58,18 L68,27.5 L69,30 L63,31 L47,39 L38,43 L33,42 L3,24.5Z" fill="#2a252b"/>
<path d="M5,14 L8,7 L16,3 L32,3.5 L44,10 L56,19 L64,28 L47,33 L38,35Z" fill="#47424c"/>
<path d="M6,9 L14,4 L21,5 L12,12Z" fill="#18141a"/>
<path d="M19,9 L27,4 L39,5.5 L47,12 L47,18 L39,23 L27,20 L20,15Z" fill="#635d68"/>
<path d="M20,15 L27,20 L39,23 L47,18 L47,21 L39,26 L27,23 L20,18Z" fill="#3a353f"/>
<path d="M29,6 l6,-1.500 5,3 -4,3 -7,-1z" fill="#3a353f"/>
<path d="M43,19 L67,28.500" stroke="#322d34" stroke-width="2.2"/>
<path d="M2,20 L38,38 L38,43 L33,42 L3,24.5Z" fill="#1b171c"/>
<path d="M38,38 L63,30 L68,30 L47,39 L38,43Z" fill="#38333a"/>
<path d="M7,24 l4,2 M14,27.500 l4,2 M21,31 l4,2 M28,34.500 l4,2" stroke="#39343a" stroke-width="2.4"/></symbol>
<symbol id="tk2" viewBox="0 0 70 44"><path d="M1,19 L2.5,15 L6,6 L16,1 L33,1.5 L45,8.5 L58,18 L68,27.5 L69,30 L63,31 L47,39 L38,43 L33,42 L3,24.5Z" fill="#3e3e3a"/>
<path d="M5,14 L8,7 L16,3 L32,3.5 L44,10 L56,19 L64,28 L47,33 L38,35Z" fill="#72726a"/>
<path d="M6,9 L14,4 L21,5 L12,12Z" fill="#4a4a44"/>
<path d="M19,9 L27,4 L39,5.5 L47,12 L47,18 L39,23 L27,20 L20,15Z" fill="#8c8c82"/>
<path d="M20,15 L27,20 L39,23 L47,18 L47,21 L39,26 L27,23 L20,18Z" fill="#5a5a52"/>
<path d="M29,6 l6,-1.500 5,3 -4,3 -7,-1z" fill="#5a5a52"/>
<path d="M43,19 L67,28.500" stroke="#50504a" stroke-width="2.2"/>
<path d="M2,20 L38,38 L38,43 L33,42 L3,24.5Z" fill="#2c2c2a"/>
<path d="M38,38 L63,30 L68,30 L47,39 L38,43Z" fill="#55554e"/>
<path d="M7,24 l4,2 M14,27.500 l4,2 M21,31 l4,2 M28,34.500 l4,2" stroke="#5a5a54" stroke-width="2.4"/></symbol><symbol id="tk3" viewBox="0 0 57 35"><path d="M0,12 L2,8 L10,3.5 L17,0 L23,0 L32,4.500 L41,11 L49,16.500 L56.500,21 L56.500,25 L50,28.500 L36,34.500 L30,34.500 L2,18Z" fill="#221d23"/>
<path d="M4,10 L11,5 L17,2 L24,2.500 L40,12.500 L50,19 L53,23 L37,30 L6,14Z" fill="#3f3a44"/>
<path d="M7,11 L36,26 L37,30 L6,14Z" fill="#4e4954"/>
<path d="M14,7 L20,2.500 L30,5 L37,11 L36,16 L26,18.500 L15,12.500Z" fill="#565059"/>
<path d="M15,12.500 L26,18.500 L36,16 L36,19 L26,21.500 L15,15.500Z" fill="#342f38"/>
<path d="M21,4.500 l5,-1 4,2.500 -3,2 -5,-1z" fill="#2e2932"/>
<path d="M34,15 L50,22.500" stroke="#2c2730" stroke-width="2"/>
<path d="M40,22 L52,22.500 L44,27Z" fill="#5a5560"/>
<path d="M5,17.500 l3,1.600 M11,20.700 l3,1.600 M17,24 l3,1.600 M23,27 l3,1.600" stroke="#3b363c" stroke-width="2"/></symbol><symbol id="tk4" viewBox="0 0 57 35"><path d="M0,12 L2,8 L10,3.500 L17,0 L23,0 L32,4.500 L41,11 L49,16.500 L56.500,21 L56.500,25 L50,28.500 L36,34.500 L30,34.500 L2,18Z" fill="#34342f"/>
<path d="M4,10 L11,5 L17,2 L24,2.500 L40,12.500 L50,19 L53,23 L37,30 L6,14Z" fill="#66665e"/>
<path d="M7,11 L36,26 L37,30 L6,14Z" fill="#7c7c72"/>
<path d="M14,7 L20,2.500 L30,5 L37,11 L36,16 L26,18.500 L15,12.500Z" fill="#84847a"/>
<path d="M15,12.500 L26,18.500 L36,16 L36,19 L26,21.500 L15,15.500Z" fill="#4e4e48"/>
<path d="M21,4.500 l5,-1 4,2.500 -3,2 -5,-1z" fill="#3c3c38"/>
<path d="M34,15 L52,23.500" stroke="#4a4a44" stroke-width="2"/>
<path d="M40,22 L52,22.500 L44,27Z" fill="#8a8a80"/>
<path d="M5,17.500 l3,1.600 M11,20.700 l3,1.600 M17,24 l3,1.600 M23,27 l3,1.600" stroke="#1e1e1c" stroke-width="2.4"/></symbol></defs></svg>
<span class="t y" style="left:198px;top:4.5px;transform-origin:100% 0;transform:translateX(-100%) scaleX(0.951);">VI号戦車ティガーI E型</span>
<svg class="a" style="left:10px;top:6px" width="70" height="44"><use href="#tk"/></svg>
<div class="a" style="left:0px;top:55px;width:208px;height:2px;background:#031c02"></div>
<span class="t y" style="left:198px;top:61.5px;transform-origin:100% 0;transform:translateX(-100%) scaleX(0.910);">Sd.Kfz.303 スプリンガー</span>
<svg class="a" style="left:6px;top:67px" width="32" height="23"><use href="#tk"/></svg>
<div class="a" style="left:0px;top:104px;width:208px;height:2px;background:#031c02"></div>
<span class="t y" style="left:198px;top:110.5px;transform-origin:100% 0;transform:translateX(-100%) scaleX(1.078);">IV号戦車 J型</span>
<svg class="a" style="left:9px;top:113px" width="57" height="35"><use href="#tk3"/></svg>
<div class="a" style="left:0px;top:154px;width:208px;height:2px;background:#031c02"></div>
<span class="t y" style="left:198px;top:160.5px;transform-origin:100% 0;transform:translateX(-100%) scaleX(1.057);">IV号戦車 F型</span>
<svg class="a" style="left:9px;top:163px" width="57" height="35"><use href="#tk3"/></svg>
<div class="a" style="left:0px;top:204px;width:208px;height:2px;background:#031c02"></div>
<span class="t y" style="left:198px;top:210.5px;transform-origin:100% 0;transform:translateX(-100%) scaleX(1.047);">III号戦車 G型</span>
<svg class="a" style="left:10px;top:212px" width="54" height="35"><use href="#tk3"/></svg>
<div class="a" style="left:0px;top:254px;width:208px;height:2px;background:#031c02"></div>
<span class="t y" style="left:198px;top:260.5px;transform-origin:100% 0;transform:translateX(-100%) scaleX(0.990);">II号戦車 L型 ルクス</span>
<svg class="a" style="left:10px;top:262px" width="55" height="36"><use href="#tk3"/></svg>
<div class="a" style="left:21px;top:64px;width:1px;height:7px;background:#1a1a1a"></div>
</div>
<div class="a sb" style="left:320px;top:271px;width:16px;height:298px;"></div>
<div class="b" style="left:320px;top:271px;width:16px;height:16px;"></div>
<svg class="a" style="left:320px;top:271px;" width="16" height="16" viewBox="0 0 16 16"><polygon points="4.5,10.0 11.5,10.0 8.0,6.0" fill="#000"/></svg>
<div class="b" style="left:320px;top:553px;width:16px;height:16px;"></div>
<svg class="a" style="left:320px;top:553px;" width="16" height="16" viewBox="0 0 16 16"><polygon points="4.5,6.0 11.5,6.0 8.0,10.0" fill="#000"/></svg>
<div class="b" style="left:320px;top:287px;width:16px;height:120px;"></div>
<div class="g" style="left:348px;top:179px;width:226px;height:398px;"></div>
<div class="a" style="left:352px;top:173px;width:105px;height:12px;background:#c0c0c0"></div>
<span class="t" style="left:354px;top:172px;transform:scaleX(0.701);transform-origin:0 0;">ユニット情報とオプション</span>
<div class="a" style="left:355px;top:188px;width:211px;height:154px;background:#124a08"></div>
<svg class="a" style="left:430px;top:240px;" width="62" height="58" viewBox="0 0 62 58"><path d="M12,13 H35 V4 L56,24 L35,44 V35 H12Z" fill="#000"/>
<path d="M9,17 V38 H35 V46" stroke="#000" stroke-width="2" fill="none"/>
<path d="M5,21 V42 H29 V54" stroke="#000" stroke-width="2" fill="none" stroke-dasharray="2 2"/>
<path d="M26,11 h2 M30,9 h2" stroke="#000" stroke-width="2"/></svg>
<div class="s1" style="left:355px;top:352px;width:211px;height:98px;"></div>
<span class="t" style="left:460px;top:352.5px;transform:translateX(-50%) scaleX(0.583);">スタティック</span>
<span class="t" style="left:356px;top:465px;transform:scaleX(0.840);transform-origin:0 0;">HP</span>
<div class="s" style="left:400px;top:457px;width:52px;height:22px;"></div>
<span class="t" style="left:403px;top:458px;transform:scaleX(0.949);transform-origin:0 0;">100</span>
<span class="t" style="left:356px;top:489px;">弾薬</span>
<div class="s" style="left:400px;top:483px;width:52px;height:22px;"></div>
<span class="t" style="left:403px;top:484px;transform:scaleX(0.949);transform-origin:0 0;">100</span>
<span class="t" style="left:356px;top:514px;transform:scaleX(0.792);transform-origin:0 0;">グループ</span>
<div class="s" style="left:400px;top:509px;width:52px;height:22px;"></div>
<span class="t" style="left:403px;top:510px;transform:scaleX(0.782);transform-origin:0 0;">H1</span>
<span class="t" style="left:462px;top:465px;">士気</span>
<div class="s" style="left:504px;top:457px;width:62px;height:22px;"></div>
<span class="t" style="left:507px;top:458px;transform:scaleX(0.973);transform-origin:0 0;">50</span>
<span class="t" style="left:462px;top:489px;">経験</span>
<div class="s" style="left:504px;top:482px;width:62px;height:22px;"></div>
<span class="t" style="left:507px;top:483px;transform:scaleX(0.949);transform-origin:0 0;">100</span>
<span class="t" style="left:462px;top:514px;transform:scaleX(0.556);transform-origin:0 0;">ライフ</span>
<div class="s" style="left:504px;top:506px;width:62px;height:22px;"></div>
<span class="t" style="left:507px;top:507px;transform:scaleX(0.897);transform-origin:0 0;">0</span>
<div class="b" style="left:357px;top:547px;width:70px;height:24px;"></div>
<span class="t dis" style="left:392px;top:552px;transform:translateX(-50%) scaleX(1.124);">In(0/0)</span>
<div class="b" style="left:430px;top:539px;width:61px;height:16px;"></div>
<span class="t" style="left:460.5px;top:540px;transform:translateX(-50%);">配置</span>
<div class="b" style="left:430px;top:555px;width:61px;height:16px;"></div>
<span class="t" style="left:460.5px;top:556px;transform:translateX(-50%);">取得</span>
<div class="b" style="left:495px;top:547px;width:71px;height:24px;"></div>
<span class="t dis" style="left:530.5px;top:552px;transform:translateX(-50%) scaleX(1.130);">Crw(0/0)</span>
<div class="g" style="left:576px;top:179px;width:347px;height:398px;"></div>
<div class="a" style="left:580px;top:173px;width:34px;height:12px;background:#c0c0c0"></div>
<span class="t" style="left:582px;top:172px;transform:scaleX(0.625);transform-origin:0 0;">コンテナ</span>
<div class="s" style="left:636px;top:190px;width:280px;height:384px;"></div>
<div class="a" style="left:639px;top:192px;width:276px;height:58px;background:#06068a;border:1px solid #a00028;border-top-width:2px"></div>
<svg class="a" style="left:650px;top:200px" width="66" height="41"><use href="#tk4"/></svg>
<svg class="a" style="left:700px;top:220px" width="100" height="28" viewBox="700 220 100 28"><ellipse cx="712" cy="244" rx="4" ry="1.600" fill="#000010"/><path d="M709,228 h5 v7 l1,8 h-2 l-1,-6 -1,6 h-2 l0,-8z" fill="#4a4536"/><rect x="710" y="225" width="3" height="3" fill="#5a5442"/><ellipse cx="731" cy="244" rx="4" ry="1.600" fill="#000010"/><path d="M728,228 h5 v7 l1,8 h-2 l-1,-6 -1,6 h-2 l0,-8z" fill="#4a4536"/><rect x="729" y="225" width="3" height="3" fill="#5a5442"/><ellipse cx="750" cy="244" rx="4" ry="1.600" fill="#000010"/><path d="M747,228 h5 v7 l1,8 h-2 l-1,-6 -1,6 h-2 l0,-8z" fill="#4a4536"/><rect x="748" y="225" width="3" height="3" fill="#5a5442"/><ellipse cx="769" cy="244" rx="4" ry="1.600" fill="#000010"/><path d="M766,228 h5 v7 l1,8 h-2 l-1,-6 -1,6 h-2 l0,-8z" fill="#4a4536"/><rect x="767" y="225" width="3" height="3" fill="#5a5442"/><ellipse cx="786" cy="244" rx="4" ry="1.600" fill="#000010"/><path d="M783,228 h5 v7 l1,8 h-2 l-1,-6 -1,6 h-2 l0,-8z" fill="#4a4536"/><rect x="784" y="225" width="3" height="3" fill="#5a5442"/></svg>
<span class="t y" style="left:903.5px;top:197.5px;transform-origin:100% 0;transform:translateX(-100%) scaleX(0.954);">V型戦車 パンター</span>
<span class="t y" style="left:903.5px;top:210px;transform-origin:100% 0;transform:translateX(-100%) scaleX(1.113);">In: 0/5 Crew: 5/5</span>
<span class="t y" style="left:903.5px;top:223.5px;transform-origin:100% 0;transform:translateX(-100%) scaleX(0.984);">G:H1 A:100HP:100E:100M:50L:0</span>
<div class="b" style="left:584px;top:205px;width:48px;height:24px;"></div>
<span class="t" style="left:608px;top:210px;transform:translateX(-50%);">追加</span>
<div class="b" style="left:579px;top:239px;width:59px;height:23px;"></div>
<span class="t" style="left:608.5px;top:243.5px;transform:translateX(-50%) scaleX(0.722);">コピー</span>
<div class="b" style="left:578px;top:270px;width:60px;height:23px;"></div>
<span class="t" style="left:608px;top:274.5px;transform:translateX(-50%) scaleX(0.833);">切り取り</span>
<div class="b" style="left:580px;top:302px;width:57px;height:23px;"></div>
<span class="t" style="left:608.5px;top:306.5px;transform:translateX(-50%);">削除</span>
<div class="b" style="left:580px;top:344px;width:57px;height:23px;"></div>
<span class="t" style="left:608.5px;top:348.5px;transform:translateX(-50%);">上</span>
<div class="b" style="left:580px;top:376px;width:54px;height:23px;"></div>
<span class="t" style="left:607px;top:380.5px;transform:translateX(-50%);">下</span>
<div class="a" style="left:577px;top:441px;width:61px;height:34px;box-shadow:inset -1px 0 #000,inset 0 -1px #000"></div>
<div class="b" style="left:577px;top:419px;width:61px;height:22px;"></div>
<span class="t" style="left:607.5px;top:423px;transform:translateX(-50%) scaleX(1.083);">選択解除</span>
<div class="b" style="left:577px;top:474px;width:61px;height:22px;"></div>
<span class="t" style="left:607.5px;top:478px;transform:translateX(-50%);">保存</span>
<div class="a" style="left:577px;top:496px;width:61px;height:52px;box-shadow:inset -1px 0 #000"></div>
<div class="b" style="left:586px;top:506px;width:45px;height:24px;"></div>
<span class="t" style="left:608.5px;top:511px;transform:translateX(-50%) scaleX(0.792);">開く</span>
<div class="b" style="left:577px;top:548px;width:61px;height:23px;"></div>
<span class="t" style="left:607.5px;top:552.5px;transform:translateX(-50%);">設定</span>
<div class="s" style="left:110px;top:587px;width:605px;height:23px;"></div>
<span class="t" style="left:113.5px;top:589.5px;transform:scaleX(1.031);transform-origin:0 0;">The Cat</span>
<div class="a" style="left:722px;top:586px;width:91px;height:25px;background:#000"></div>
<div class="b" style="left:723px;top:587px;width:89px;height:23px;"></div>
<span class="t" style="left:767.5px;top:591.5px;transform:translateX(-50%) scaleX(0.923);">OK</span>
<div class="b" style="left:820px;top:587px;width:88px;height:23px;"></div>
<span class="t" style="left:864px;top:591.5px;transform:translateX(-50%) scaleX(0.633);">キャンセル</span></body></html>
